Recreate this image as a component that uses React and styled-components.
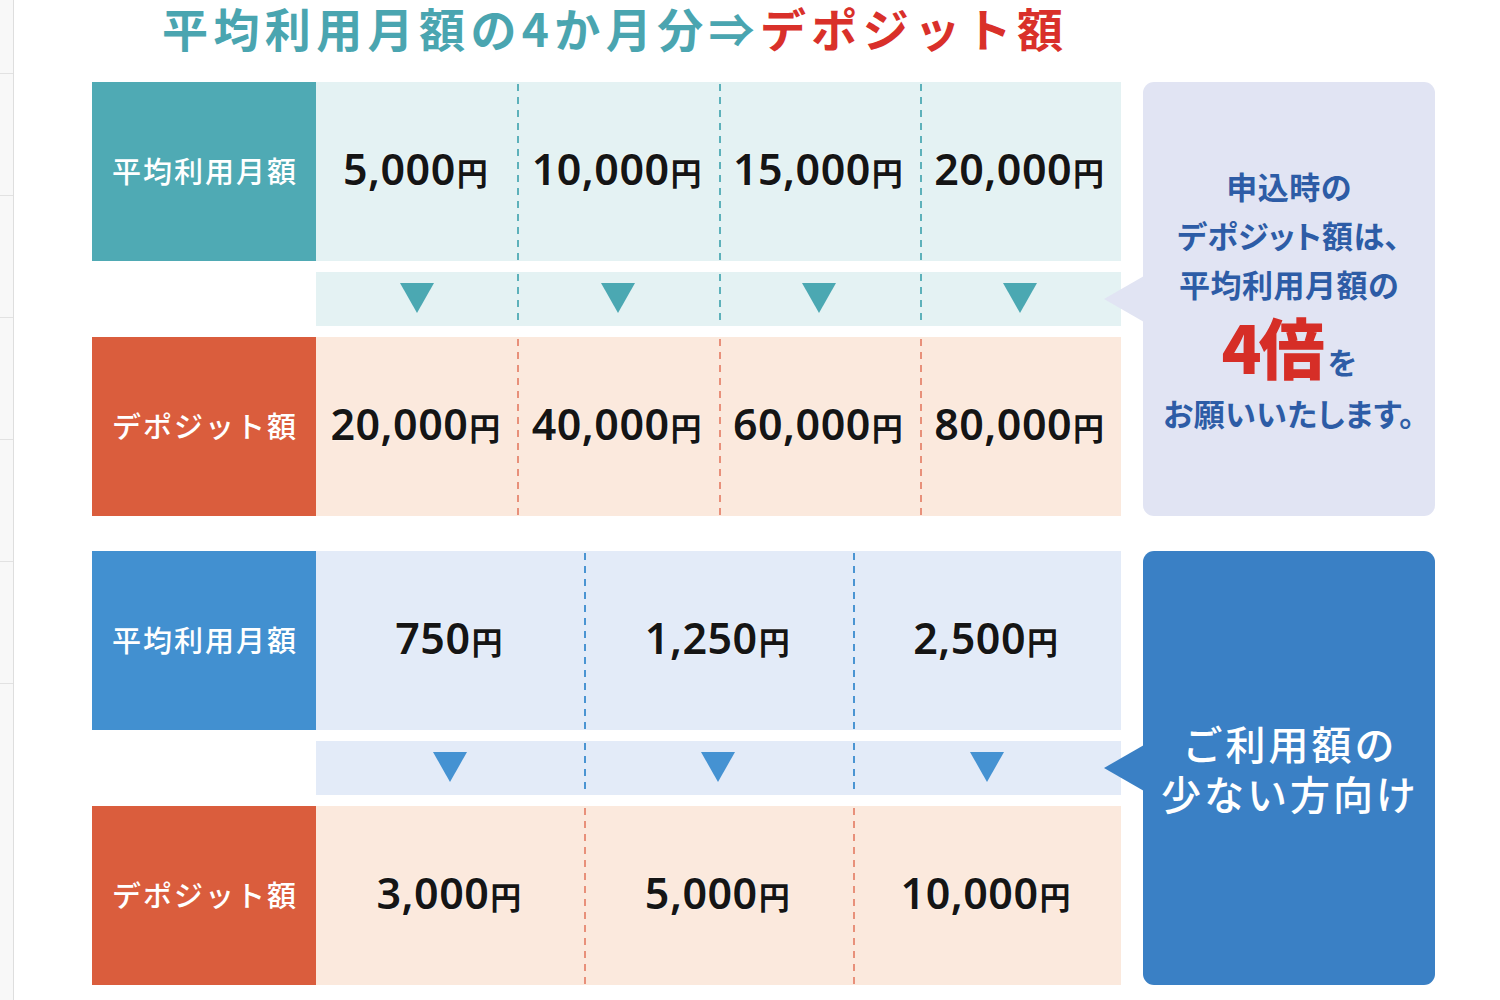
import React from 'react';
import styled, { createGlobalStyle } from 'styled-components';

const GlobalStyle = createGlobalStyle`
  html, body {
    margin: 0;
    padding: 0;
    background: #ffffff;
  }
  body {
    font-family: "Noto Sans CJK JP", "Noto Sans", sans-serif;
  }
`;

const themes = {
  teal: { label: '#4faab4', bg: '#e4f2f3', dash: '#5db1ba', arrow: '#4ba8b2' },
  blue: { label: '#4290d0', bg: '#e3ebf8', dash: '#4a94d2', arrow: '#4592d2' },
  deposit: { label: '#da5d3d', bg: '#fbe9dd', dash: '#e8907a' },
};

const groups = [
  {
    theme: 'teal',
    averages: ['5,000', '10,000', '15,000', '20,000'],
    deposits: ['20,000', '40,000', '60,000', '80,000'],
    callout: 'light',
  },
  {
    theme: 'blue',
    averages: ['750', '1,250', '2,500'],
    deposits: ['3,000', '5,000', '10,000'],
    callout: 'dark',
  },
];

const Page = styled.div`
  display: flex;
  width: 1500px;
  height: 1000px;
  overflow: hidden;
`;

const Sidebar = styled.div`
  width: 13px;
  flex-shrink: 0;
  background: #f8f8f8;
  border-right: 1px solid #dedede;
  display: flex;
  flex-direction: column;
`;

const SideItem = styled.div`
  height: ${(p) => p.$h}px;
  flex-shrink: 0;
  border-bottom: 1px solid #e2e2e2;
  box-sizing: border-box;
`;

const Main = styled.div`
  flex: 1;
  padding-left: 78px;
  display: flex;
  flex-direction: column;
  gap: 35px;
`;

const Title = styled.h1`
  flex-shrink: 0;
  margin: 0 0 -11px 70px;
  height: 58px;
  font-size: 46px;
  line-height: 54px;
  font-weight: 700;
  letter-spacing: 5.4px;
  color: #4aa5b0;
  white-space: nowrap;
`;

const Red = styled.span`
  color: #d9302a;
`;

const Section = styled.div`
  flex-shrink: 0;
  display: flex;
  gap: 22px;
`;

const Table = styled.div`
  width: 1029px;
  display: flex;
  flex-direction: column;
  gap: 11px;
`;

const Row = styled.div`
  display: flex;
  height: ${(p) => (p.$arrow ? 54 : 179)}px;
  padding-left: ${(p) => (p.$arrow ? 224 : 0)}px;
`;

const Label = styled.div`
  width: 224px;
  flex-shrink: 0;
  box-sizing: border-box;
  background: ${(p) => p.$color};
  color: #ffffff;
  display: flex;
  align-items: center;
  justify-content: center;
  font-size: 29px;
  font-weight: 500;
  letter-spacing: 2px;
  padding: 0 0 4px 2px;
`;

const Cell = styled.div`
  flex: 1;
  display: flex;
  align-items: center;
  justify-content: center;
  background-color: ${(p) => p.$bg};
  background-image: ${(p) =>
    p.$divider ? `linear-gradient(to bottom, ${p.$dash} 55%, transparent 55%)` : 'none'};
  background-size: 1.5px 13px;
  background-repeat: repeat-y;
  background-position: 0 2px;
`;

const Amount = styled.span`
  font-family: "Noto Sans", "Noto Sans CJK JP", sans-serif;
  font-size: 43px;
  font-weight: 600;
  color: #151515;
  letter-spacing: 0.5px;
  margin: 0 2px 7px 0;
  text-shadow: 0 0 2px #ffffff;
`;

const Yen = styled.span`
  font-family: "Noto Sans CJK JP", sans-serif;
  font-size: 31px;
  font-weight: 700;
  margin-left: 1px;
`;

const Arrow = styled.div`
  width: 0;
  height: 0;
  border-left: 17.5px solid transparent;
  border-right: 17.5px solid transparent;
  border-top: 30px solid ${(p) => p.$color};
  margin-bottom: 2px;
`;

const Callout = styled.div`
  position: relative;
  width: 292px;
  border-radius: 11px;
  background: ${(p) => (p.$dark ? '#3a80c5' : '#e1e4f3')};
  display: flex;
  flex-direction: column;
  align-items: center;
  justify-content: center;
  &::before {
    content: '';
    position: absolute;
    left: -39px;
    top: 50%;
    transform: translateY(-50%);
    border-top: 23.5px solid transparent;
    border-bottom: 23.5px solid transparent;
    border-right: 40px solid ${(p) => (p.$dark ? '#3a80c5' : '#e1e4f3')};
  }
`;

const NoteLine = styled.div`
  font-size: 31px;
  line-height: 49px;
  font-weight: 700;
  color: #2d5ca6;
  font-feature-settings: "palt";
  letter-spacing: 0.5px;
  white-space: nowrap;
`;

const BigLine = styled.div`
  height: 80px;
  box-sizing: border-box;
  padding: 4px 0 0 0;
  display: flex;
  justify-content: center;
  align-items: baseline;
  font-feature-settings: "palt";
`;

const Big = styled.span`
  font-size: 66px;
  line-height: 66px;
  font-weight: 900;
  color: #d62e27;
  letter-spacing: -3px;
`;

const Small = styled.span`
  font-size: 30px;
  line-height: 30px;
  font-weight: 700;
  color: #2d5ca6;
  margin-left: 6px;
`;

const DarkLine = styled.div`
  font-size: 40px;
  line-height: 50px;
  font-weight: 500;
  color: #ffffff;
  letter-spacing: 3px;
  white-space: nowrap;
  padding-left: 2px;
`;

const Money = ({ value }) => (
  <Amount>
    {value}
    <Yen>円</Yen>
  </Amount>
);

const Group = ({ group }) => {
  const t = themes[group.theme];
  const d = themes.deposit;
  return (
    <Section>
      <Table>
        <Row>
          <Label $color={t.label}>平均利用月額</Label>
          {group.averages.map((v, i) => (
            <Cell key={v} $bg={t.bg} $dash={t.dash} $divider={i > 0}>
              <Money value={v} />
            </Cell>
          ))}
        </Row>
        <Row $arrow>
          {group.averages.map((v, i) => (
            <Cell key={v} $bg={t.bg} $dash={t.dash} $divider={i > 0}>
              <Arrow $color={t.arrow} />
            </Cell>
          ))}
        </Row>
        <Row>
          <Label $color={d.label}>デポジット額</Label>
          {group.deposits.map((v, i) => (
            <Cell key={v} $bg={d.bg} $dash={d.dash} $divider={i > 0}>
              <Money value={v} />
            </Cell>
          ))}
        </Row>
      </Table>
      {group.callout === 'light' ? (
        <Callout>
          <NoteLine>申込時の</NoteLine>
          <NoteLine>デポジット額は、</NoteLine>
          <NoteLine>平均利用月額の</NoteLine>
          <BigLine>
            <Big>4倍</Big>
            <Small>を</Small>
          </BigLine>
          <NoteLine>お願いいたします。</NoteLine>
        </Callout>
      ) : (
        <Callout $dark>
          <DarkLine>ご利用額の</DarkLine>
          <DarkLine>少ない方向け</DarkLine>
        </Callout>
      )}
    </Section>
  );
};

export default function App() {
  return (
    <>
      <GlobalStyle />
      <Page>
        <Sidebar>
          <SideItem $h={74} />
          <SideItem $h={122} />
          <SideItem $h={122} />
          <SideItem $h={122} />
          <SideItem $h={122} />
          <SideItem $h={122} />
        </Sidebar>
        <Main>
          <Title>
            平均利用月額の4か月分⇒<Red>デポジット額</Red>
          </Title>
          {groups.map((g) => (
            <Group key={g.theme} group={g} />
          ))}
        </Main>
      </Page>
    </>
  );
}
